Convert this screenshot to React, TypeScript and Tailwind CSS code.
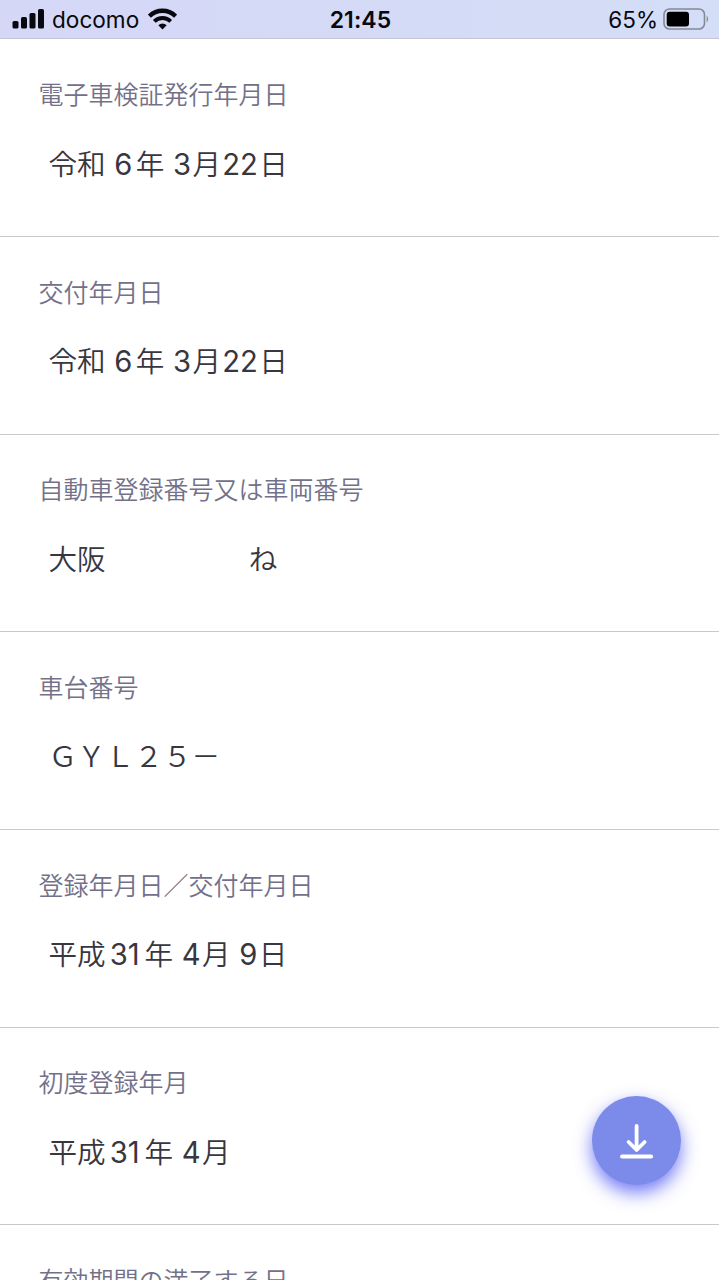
import { clsx } from "clsx"

type Field = {
  label: string
  value: string
}

const fields: Field[] = [
  { label: "電子車検証発行年月日", value: "令和 6年 3月22日" },
  { label: "交付年月日", value: "令和 6年 3月22日" },
  { label: "自動車登録番号又は車両番号", value: "大阪\u3000\u3000\u3000\u3000\u3000ね" },
  { label: "車台番号", value: "ＧＹＬ２５－" },
  { label: "登録年月日／交付年月日", value: "平成31年 4月 9日" },
  { label: "初度登録年月", value: "平成31年 4月" },
  { label: "有効期間の満了する日", value: "" },
]

function StatusBar() {
  return (
    <header className="grid h-[39.35px] shrink-0 grid-cols-3 items-center border-b border-[#c3c5d2] bg-linear-to-r from-[#d5d7f6] to-[#d4def7] pr-2.5 pl-3 text-[#08080f]">
      <div className="flex items-center">
        <svg width="33" height="20" viewBox="0 0 33 20" fill="currentColor">
          <rect x="0.5" y="12" width="6" height="7.5" rx="1.6" />
          <rect x="9" y="8" width="6" height="11.5" rx="1.6" />
          <rect x="17.5" y="4" width="6" height="15.5" rx="1.6" />
          <rect x="26" y="0" width="6" height="19.5" rx="1.6" />
        </svg>
        <span className="mt-0.5 ml-[7px] text-[22.6px] leading-none">docomo</span>
        <svg className="ml-[9px]" width="29" height="22" viewBox="0 0 29 22" fill="none" stroke="currentColor">
          <path d="M1.4 8.1 A18.7 18.7 0 0 1 27.6 8.1" strokeWidth="4.3" />
          <path d="M6.3 13.4 A11.6 11.6 0 0 1 22.7 13.4" strokeWidth="3.9" />
          <path d="M14.5 21.6 L10.3 17.3 A6 6 0 0 1 18.7 17.3 Z" fill="currentColor" stroke="none" />
        </svg>
      </div>
      <div className="mt-0.5 text-center text-[23px] leading-none font-semibold tracking-[0.1px]">21:45</div>
      <div className="flex items-center justify-end">
        <span className="mt-0.5 text-[22.5px] leading-none">65%</span>
        <svg className="ml-[5px]" width="46" height="22" viewBox="0 0 46 22">
          <rect x="1" y="1" width="40.5" height="20" rx="5.5" fill="none" stroke="#858994" strokeWidth="1.6" />
          <rect x="3.7" y="3.8" width="22.3" height="14.6" rx="3" fill="#000" />
          <path d="M43.7 7.5 Q46.6 11 43.7 14.5 Z" fill="#858994" />
        </svg>
      </div>
    </header>
  )
}

// digits get a little air next to the kanji around them
function Value({ text }: { text: string }) {
  const parts = text.split(/(\d+)/)

  return (
    <>
      {parts.map((part, i) =>
        /^\d+$/.test(part) ? (
          <span
            key={i}
            className={clsx(
              "text-[29.2px] font-normal",
              parts[i + 1].startsWith("年") ? (part.length > 1 ? "mr-[5px]" : "mr-[3.5px]") : "mr-[1.5px]",
              parts[i - 1].endsWith("成") && "ml-[4px]",
              parts[i - 1].endsWith("月") && "ml-[1px]",
              parts[i - 1].endsWith(" ") && "ml-[0.5px]",
            )}
          >
            {part}
          </span>
        ) : (
          <span key={i}>{part}</span>
        ),
      )}
    </>
  )
}

function FieldRow({ label, value }: Field) {
  return (
    <div className="h-[197.65px] shrink-0 border-b border-[#c9c9cb] px-[38.5px] pt-[37.6px]">
      <div className="h-9 text-[25px] leading-9 font-[350] whitespace-pre text-[#737189]">{label}</div>
      <div className="mt-[31.6px] h-10 pl-2.5 text-[28.6px] leading-10 font-[350] whitespace-pre text-[#38363f]">
        <Value text={value} />
      </div>
    </div>
  )
}

export default function App() {
  return (
    <div className="relative flex h-[1280px] w-[719px] flex-col overflow-hidden bg-white font-['Inter','Noto_Sans_CJK_JP',sans-serif]" lang="ja">
      <StatusBar />
      <main className="flex min-h-0 flex-1 flex-col overflow-hidden">
        {fields.map((field) => (
          <FieldRow key={field.label} {...field} />
        ))}
      </main>

      {/* download button */}
      <button
        aria-label="ダウンロード"
        className="absolute right-[38px] bottom-[95px] flex size-[89px] items-center justify-center rounded-full bg-[#7c8be9] shadow-[0_8px_18px_rgba(72,80,240,0.75)]"
      >
        <svg width="34" height="36" viewBox="0 0 34 36" fill="none" stroke="#fff" strokeWidth="3.8" strokeLinecap="round" strokeLinejoin="round">
          <path d="M16.6 3 V26.5 M8.6 19 L16.6 27 L24.6 19" />
          <path d="M2 33.5 H31.2" />
        </svg>
      </button>
    </div>
  )
}
